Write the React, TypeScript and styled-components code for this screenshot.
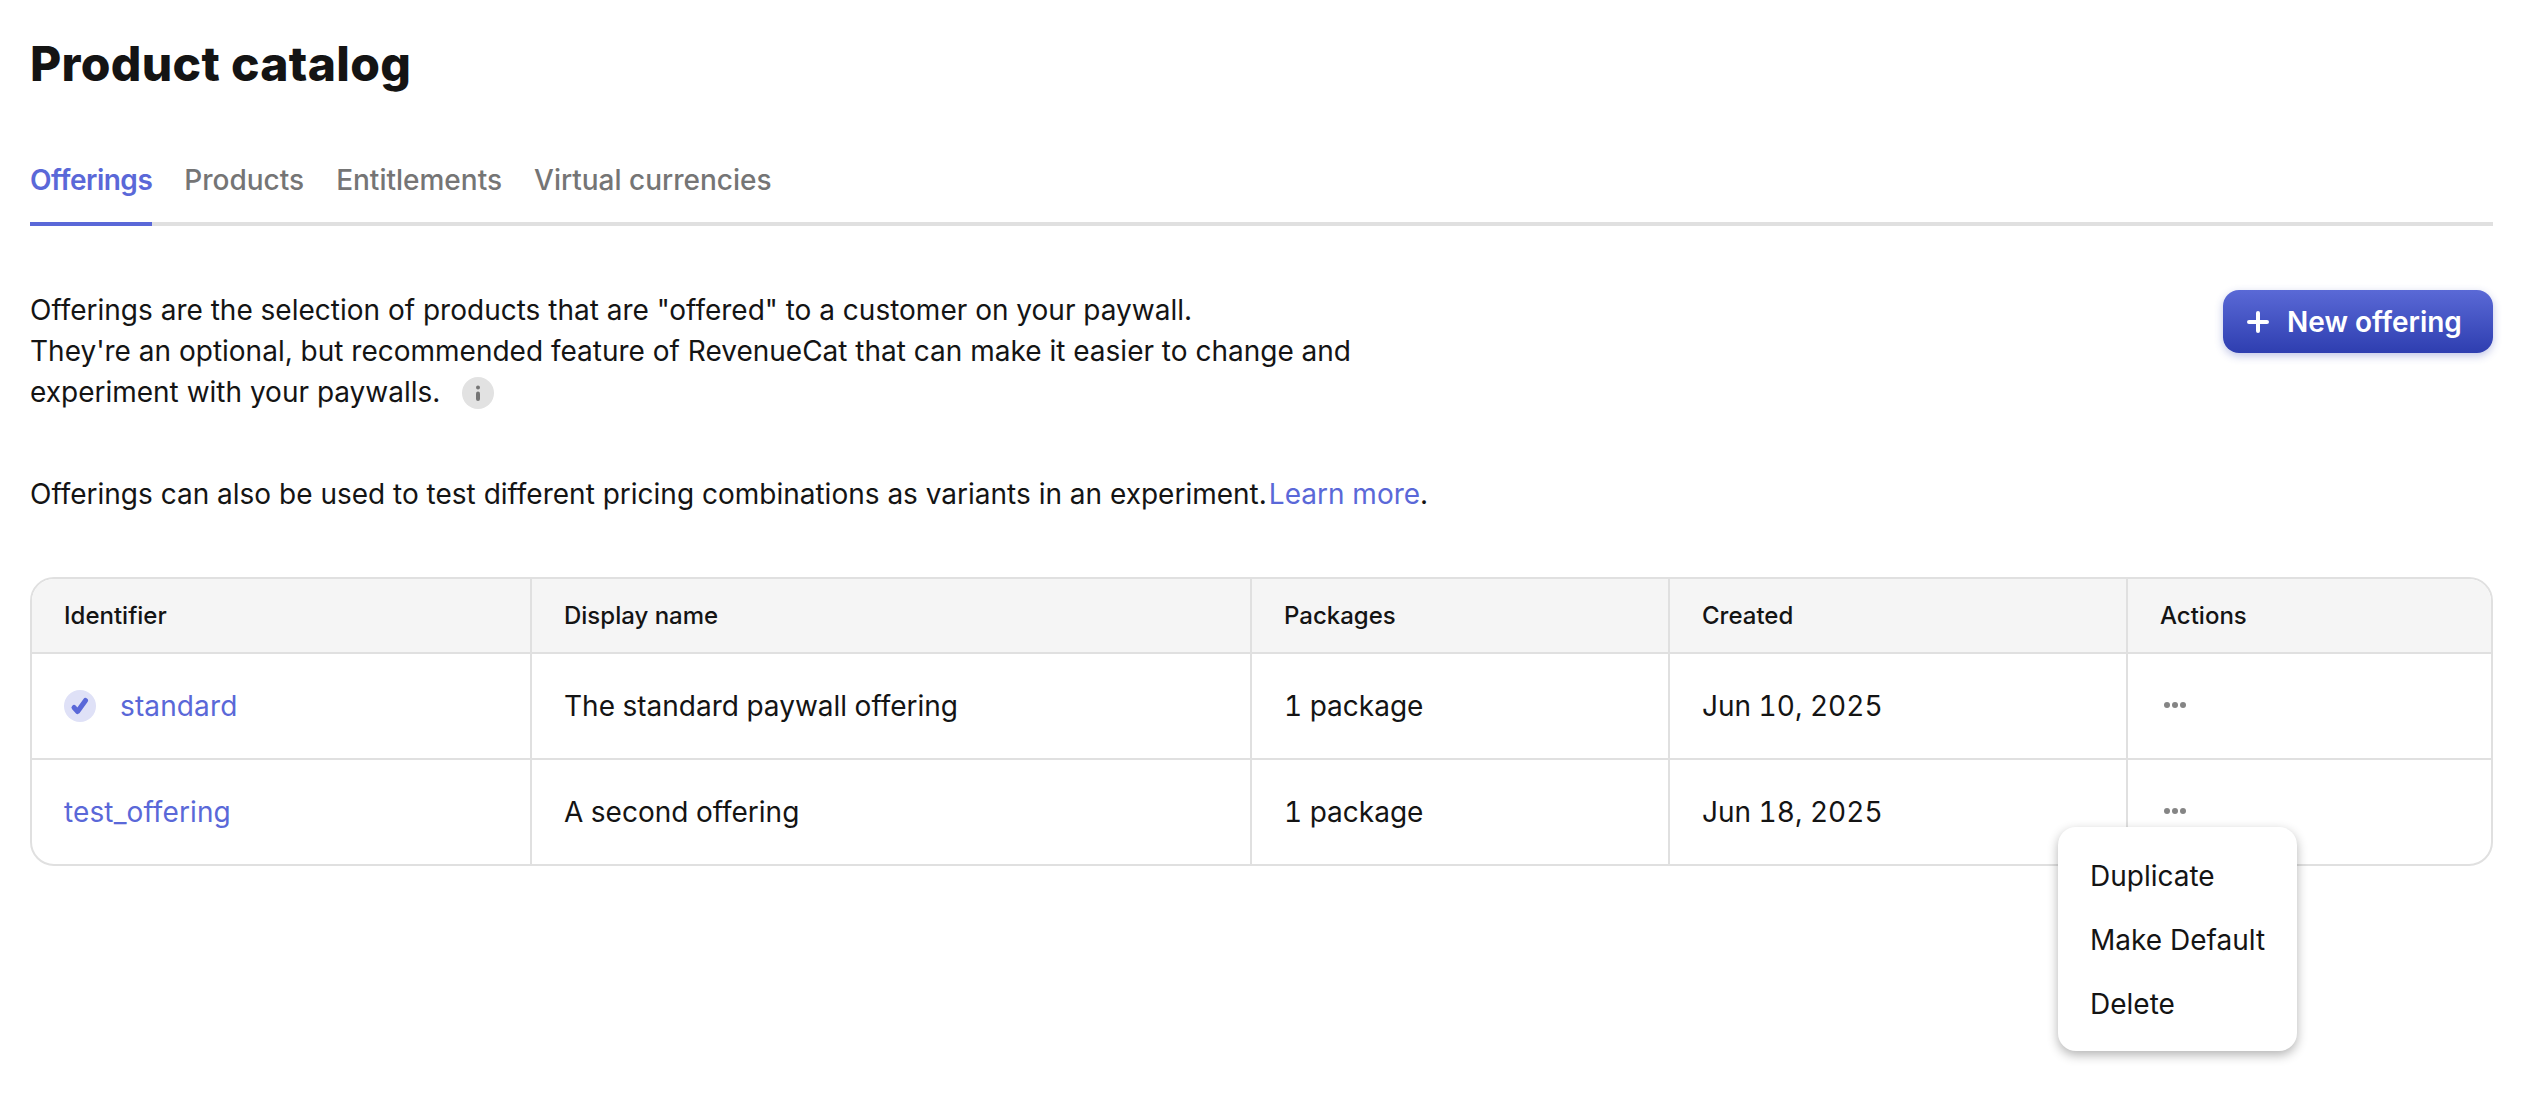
import styled, { createGlobalStyle } from "styled-components";

const GlobalStyle = createGlobalStyle`
  html, body {
    margin: 0;
    padding: 0;
    background: #fff;
    color: #111;
    font-family: Inter, "Liberation Sans", sans-serif;
  }
`;

const Page = styled.div`
  padding: 35px 37px 0 30px;
  min-height: 1069px;
`;

const Title = styled.h1`
  margin: 0;
  font-size: 48px;
  line-height: 58px;
  font-weight: 800;
  letter-spacing: 0.32px;
  color: #141414;
`;

const Tabs = styled.nav`
  display: flex;
  gap: 32px;
  margin-top: 50px;
  border-bottom: 4px solid #e0e0e0;
`;

const Tab = styled.a<{ $active?: boolean }>`
  padding: 18px 0 23px;
  margin-bottom: -4px;
  font-size: 28px;
  line-height: 38px;
  font-weight: ${(p) => (p.$active ? 600 : 500)};
  letter-spacing: ${(p) => (p.$active ? "-0.5px" : "0")};
  color: ${(p) => (p.$active ? "#5a68d8" : "#757575")};
  border-bottom: 4px solid ${(p) => (p.$active ? "#5a68d8" : "transparent")};
`;

const Intro = styled.section`
  display: flex;
  justify-content: space-between;
  align-items: flex-start;
  margin-top: 64px;
`;

const Description = styled.div`
  width: 1340px;
  font-size: 28px;
  line-height: 41px;
  color: #141414;
`;

const Note = styled.p`
  margin: 61px 0 0;
  font-size: 28px;
  line-height: 40px;
  color: #141414;
  white-space: nowrap;
`;

const InfoBadge = styled.span`
  display: inline-flex;
  align-items: center;
  justify-content: center;
  width: 32px;
  height: 32px;
  margin-left: 22px;
  border-radius: 50%;
  background: #e2e2e2;
  vertical-align: 1px;
`;

const TextLink = styled.a`
  margin-left: 2px;
  color: #5a68d8;
`;

const PrimaryButton = styled.button`
  display: flex;
  align-items: center;
  gap: 18px;
  height: 63px;
  width: 270px;
  padding: 0 0 0 24px;
  border: 0;
  border-radius: 16px;
  background: linear-gradient(180deg, #5a69d6 0%, #2e3eb0 100%);
  box-shadow: 0 3px 8px rgba(46, 62, 176, 0.3);
  color: #fff;
  font-family: inherit;
  font-size: 28px;
  font-weight: 600;
`;

const Table = styled.div`
  margin-top: 63px;
  border: 2px solid #e0e0e0;
  border-radius: 24px;
  overflow: hidden;
  font-variant-numeric: tabular-nums;
`;

const Row = styled.div`
  display: grid;
  grid-template-columns: 498px 720px 418px 458px 1fr;
  height: 104px;
  border-top: 2px solid #e0e0e0;
`;

const HeadRow = styled(Row)`
  height: 73px;
  border-top: 0;
  background: #f5f5f5;
`;

const Cell = styled.div`
  display: flex;
  align-items: center;
  gap: 24px;
  padding-left: 32px;
  border-left: 2px solid #e0e0e0;
  font-size: 28px;
  color: #141414;

  &:first-child {
    border-left: 0;
  }
`;

const HeadCell = styled(Cell)`
  font-size: 24px;
  font-weight: 500;
  color: #141414;
`;

const IdLink = styled.a`
  letter-spacing: 0.12px;
  color: #5a68d8;
`;

const DefaultBadge = styled.span`
  display: inline-flex;
  align-items: center;
  justify-content: center;
  width: 32px;
  height: 32px;
  border-radius: 50%;
  background: #dfe1f7;
`;

const Dots = styled.span`
  display: flex;
  gap: 2px;
  margin: -2px 0 0 4px;
`;

const Dot = styled.i`
  width: 6px;
  height: 6px;
  border-radius: 50%;
  background: #858585;
`;

const MenuAnchor = styled.div`
  position: relative;
`;

const Menu = styled.div`
  position: absolute;
  top: 250px;
  right: 196px;
  box-sizing: border-box;
  width: 239px;
  height: 224px;
  padding: 17px 0 0 32px;
  border-radius: 18px;
  background: #fff;
  box-shadow: 0 4px 11px rgba(0, 0, 0, 0.3);
`;

const MenuItem = styled.div`
  height: 64px;
  font-size: 28px;
  line-height: 64px;
  color: #141414;
`;

const rows = [
  { id: "standard", name: "The standard paywall offering", created: "Jun 10, 2025", isDefault: true },
  { id: "test_offering", name: "A second offering", created: "Jun 18, 2025", isDefault: false },
];

const App = () => {
  return (
    <>
      <GlobalStyle />
      <Page>
        <Title>Product catalog</Title>
        <Tabs>
          <Tab $active>Offerings</Tab>
          <Tab>Products</Tab>
          <Tab>Entitlements</Tab>
          <Tab>Virtual currencies</Tab>
        </Tabs>

        <Intro>
          <Description>
            Offerings are the selection of products that are "offered" to a customer on your paywall.
            <br />
            They're an optional, but recommended feature of RevenueCat that can make it easier to change and
            experiment with your paywalls.
            <InfoBadge>
              <svg width="6" height="16" viewBox="0 0 6 16">
                <circle cx="3" cy="2.5" r="2" fill="#757575" />
                <rect x="1" y="6.5" width="4" height="9.5" rx="2" fill="#757575" />
              </svg>
            </InfoBadge>
          </Description>
          <PrimaryButton>
            <svg width="22" height="22" viewBox="0 0 22 22">
              <path d="M11 2v18M2 11h18" stroke="#fff" strokeWidth="4" strokeLinecap="round" />
            </svg>
            New offering
          </PrimaryButton>
        </Intro>
        <Note>
          Offerings can also be used to test different pricing combinations as variants in an experiment.
          <TextLink>Learn more</TextLink>.
        </Note>

        <MenuAnchor>
          <Table>
            <HeadRow>
              <HeadCell>Identifier</HeadCell>
              <HeadCell>Display name</HeadCell>
              <HeadCell>Packages</HeadCell>
              <HeadCell>Created</HeadCell>
              <HeadCell>Actions</HeadCell>
            </HeadRow>
            {rows.map((row) => (
              <Row key={row.id}>
                <Cell>
                  {row.isDefault && (
                    <DefaultBadge>
                      <svg width="20" height="20" viewBox="0 0 20 20">
                        <path
                          d="M4 11.5l3.6 4L15.5 4.5"
                          fill="none"
                          stroke="#5a68d8"
                          strokeWidth="5"
                          strokeLinecap="round"
                          strokeLinejoin="round"
                        />
                      </svg>
                    </DefaultBadge>
                  )}
                  <IdLink>{row.id}</IdLink>
                </Cell>
                <Cell>{row.name}</Cell>
                <Cell>1 package</Cell>
                <Cell>{row.created}</Cell>
                <Cell>
                  <Dots>
                    <Dot />
                    <Dot />
                    <Dot />
                  </Dots>
                </Cell>
              </Row>
            ))}
          </Table>
          <Menu>
            <MenuItem>Duplicate</MenuItem>
            <MenuItem>Make Default</MenuItem>
            <MenuItem>Delete</MenuItem>
          </Menu>
        </MenuAnchor>
      </Page>
    </>
  );
};

export default App;
